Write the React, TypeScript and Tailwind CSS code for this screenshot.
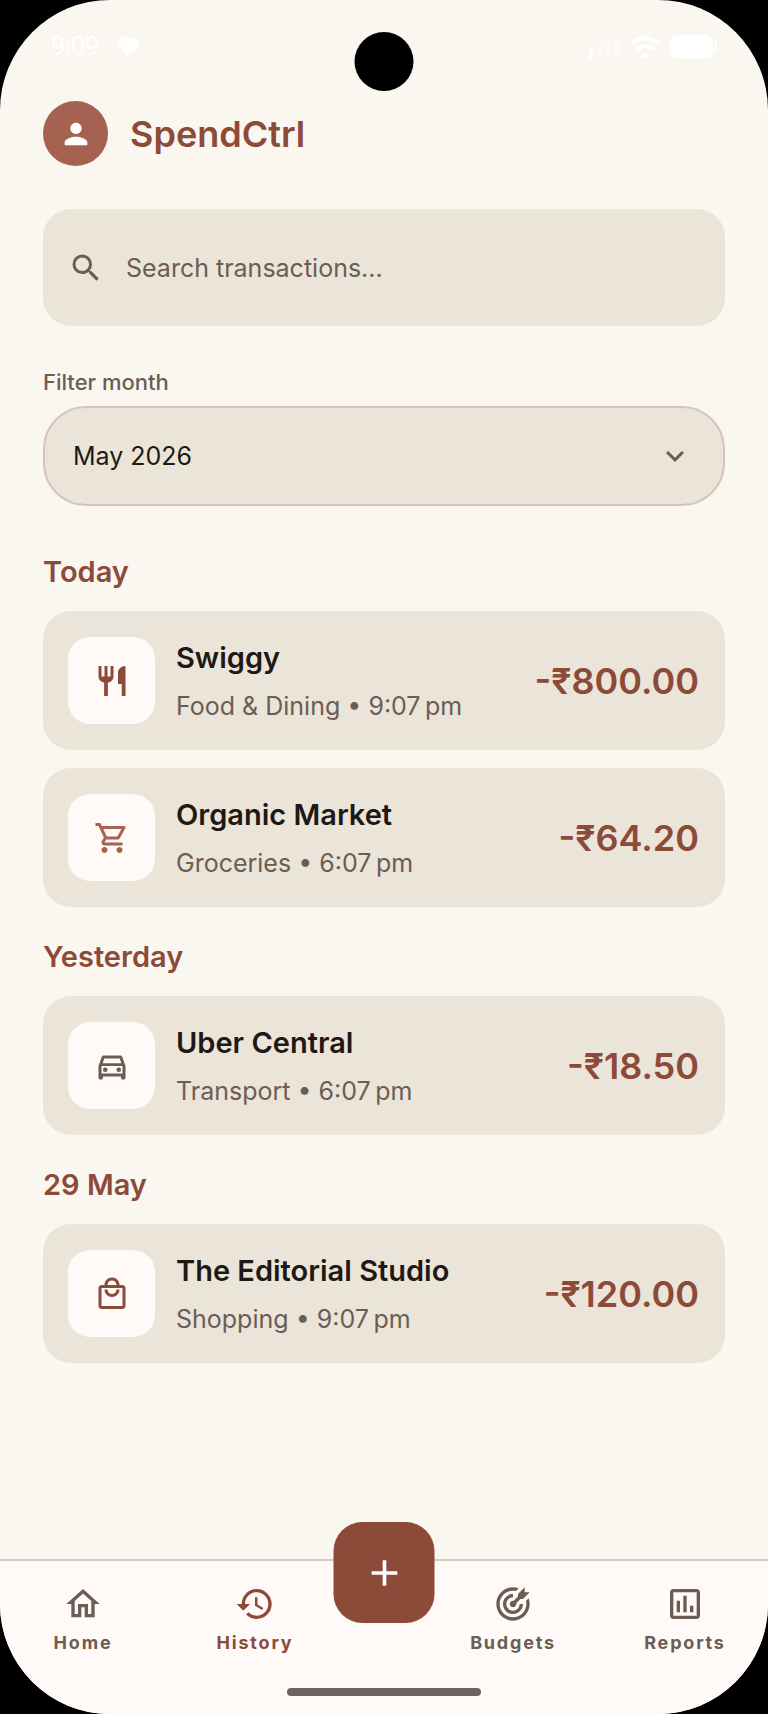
"use client";

import { useState } from "react";
import type { ReactNode } from "react";
import {
    MdAdd,
    MdHistory,
    MdKeyboardArrowDown,
    MdOutlineDirectionsCar,
    MdOutlineHome,
    MdOutlineLocalMall,
    MdOutlineShoppingCart,
    MdPerson,
    MdRestaurant,
    MdSearch,
} from "react-icons/md";

type Transaction = {
    name: string;
    category: string;
    time: string;
    amount: string;
    icon: ReactNode;
};

const groups: { label: string; items: Transaction[] }[] = [
    {
        label: "Today",
        items: [
            {
                name: "Swiggy",
                category: "Food & Dining",
                time: "9:07\u202fpm",
                amount: "-₹800.00",
                icon: <MdRestaurant className="size-9 text-[#8c4a38]" />,
            },
            {
                name: "Organic Market",
                category: "Groceries",
                time: "6:07\u202fpm",
                amount: "-₹64.20",
                icon: <MdOutlineShoppingCart className="size-9 text-[#a8624f]" />,
            },
        ],
    },
    {
        label: "Yesterday",
        items: [
            {
                name: "Uber Central",
                category: "Transport",
                time: "6:07\u202fpm",
                amount: "-₹18.50",
                icon: <MdOutlineDirectionsCar className="size-9 text-[#6b5d54]" />,
            },
        ],
    },
    {
        label: "29 May",
        items: [
            {
                name: "The Editorial Studio",
                category: "Shopping",
                time: "9:07\u202fpm",
                amount: "-₹120.00",
                icon: <MdOutlineLocalMall className="size-9 text-[#8c4a38]" />,
            },
        ],
    },
];

function TargetIcon() {
    return (
        <svg viewBox="0 0 24 24" fill="currentColor" className="size-10">
            <path d="M12 2C6.47 2 2 6.5 2 12C2 17.5 6.5 22 12 22S22 17.5 22 12C22 10.84 21.79 9.69 21.39 8.61L19.79 10.21C19.93 10.8 20 11.4 20 12C20 16.42 16.42 20 12 20S4 16.42 4 12 7.58 4 12 4C12.6 4 13.2 4.07 13.79 4.21L15.4 2.6C14.31 2.21 13.16 2 12 2M19 2L15 6V7.5L12.45 10.05C12.3 10 12.15 10 12 10C10.9 10 10 10.9 10 12S10.9 14 12 14 14 13.1 14 12C14 11.85 14 11.7 13.95 11.55L16.5 9H18L22 5H19V2M12 6C8.69 6 6 8.69 6 12S8.69 18 12 18 18 15.31 18 12H16C16 14.21 14.21 16 12 16S8 14.21 8 12 9.79 8 12 8V6Z" />
        </svg>
    );
}

function ReportsIcon() {
    return (
        <svg viewBox="0 0 24 24" fill="currentColor" className="size-10">
            <path d="M9 17H7v-7h2v7zm4 0h-2V7h2v10zm4 0h-2v-4h2v4zm2 2H5V5h14v14zm0-16H5c-1.1 0-2 .9-2 2v14c0 1.1.9 2 2 2h14c1.1 0 2-.9 2-2V5c0-1.1-.9-2-2-2z" />
        </svg>
    );
}

function StatusBar() {
    return (
        <div className="relative flex h-[92px] items-center justify-between px-[51px] pt-[2px] text-white">
            <div className="flex items-center gap-[18px]">
                <span className="font-['Roboto',sans-serif] text-[25px] leading-7">9:09</span>
                <svg viewBox="0 0 22 22" fill="currentColor" className="size-[22px]">
                    <path d="M3 11.5C1 10 .2 8 .8 5.600C1.500 2.500 4 .5 7 .5H13C15 .5 16.500 1 17.500 1.800C13 1.200 8 .8 5.500 2.500C3 4.200 2.200 7.500 3 11.500Z" />
                    <path d="M9.500 1.800H14.500C18.500 1.800 21.500 4.800 21.500 9C21.500 13 18.500 16.200 14.500 16.200H12V21.500C7.500 18.500 3 13.500 3 8.500C3 4.500 5.500 1.800 9.500 1.800Z" />
                </svg>
            </div>

            {/* Camera cutout */}
            <div className="absolute left-1/2 top-8 size-[59px] -translate-x-1/2 rounded-full bg-black"></div>

            <div className="flex items-center gap-[10px]">
                <svg viewBox="0 0 31 24" fill="currentColor" className="h-6 w-[31px]">
                    <rect x="0" y="14" width="4.500" height="9.500" rx="2" />
                    <g className="text-[#fff8f5]">
                        <rect x="9" y="10" width="4.500" height="13" rx="1.500" />
                        <rect x="17.500" y="5.500" width="4.500" height="17.500" rx="1.500" />
                        <rect x="26" y="1.500" width="4.500" height="21.500" rx="1.500" />
                    </g>
                </svg>
                <svg viewBox="0 0 30 24" className="h-6 w-[30px]" fill="none" stroke="currentColor" strokeWidth="4" strokeLinecap="round">
                    <path d="M2.500 8C9 1.500 21 1.500 27.500 8" />
                    <path d="M8.500 13.500C12 10.500 18 10.500 21.500 13.500" />
                    <circle cx="15" cy="20.500" r="2.800" fill="currentColor" stroke="none" />
                </svg>
                <svg viewBox="0 0 47 24" fill="currentColor" className="h-6 w-[47px]">
                    <rect x="0" y="0" width="43" height="23.500" rx="7" />
                    <path d="M44.500 6.500C46 6.500 47 7.500 47 9V14.500C47 16 46 17 44.500 17Z" />
                </svg>
            </div>
        </div>
    );
}

function TransactionCard({ item }: { item: Transaction }) {
    return (
        <li className="flex items-center gap-[21px] rounded-[28px] bg-[#ebe4d9] py-[26px] pr-[26px] pl-[25px]">
            <div className="flex size-[87px] shrink-0 items-center justify-center rounded-[22px] bg-[#fff9f7]">
                {item.icon}
            </div>
            <div className="flex min-w-0 flex-1 flex-col gap-3">
                <h3 className="text-[29px] leading-[38px] font-semibold text-[#1f1815]">{item.name}</h3>
                <p className="text-[25px] leading-[34px] text-[#6b5d54]">
                    {item.category} • {item.time}
                </p>
            </div>
            <span className="text-[36px] leading-[44px] font-semibold text-[#8c4a38]">{item.amount}</span>
        </li>
    );
}

function NavItem({ label, icon, active }: { label: string; icon: ReactNode; active?: boolean }) {
    return (
        <a
            href="#"
            aria-current={active ? "page" : undefined}
            className={`flex w-24 flex-col items-center gap-[7px] ${active ? "text-[#8c4a38]" : "text-[#6b5d54]"}`}
        >
            {icon}
            <span className="text-[18px] leading-6 font-bold tracking-widest">{label}</span>
        </a>
    );
}

export default function App() {
    const [search, setSearch] = useState("");
    const [month, setMonth] = useState("May 2026");

    return (
        <div className="min-h-screen bg-black font-['Inter',sans-serif]">
            <div className="flex min-h-screen flex-col overflow-hidden rounded-[110px] bg-[#faf6f0]">
                <StatusBar />

                <main className="flex-1 px-[43px] pt-[9px] pb-10">
                    <header className="flex items-center gap-[22px]">
                        <button
                            aria-label="Profile"
                            className="flex size-[65px] items-center justify-center rounded-full bg-[#a66250] text-white"
                        >
                            <MdPerson className="size-[34px]" />
                        </button>
                        <h1 className="text-[36px] leading-[44px] font-semibold text-[#8c4a38]">SpendCtrl</h1>
                    </header>

                    {/* Search */}
                    <div className="mt-[43px] flex h-[117px] items-center gap-[22px] rounded-[28px] bg-[#ebe4d9] px-[25px]">
                        <MdSearch className="size-9 shrink-0 text-[#6b5d54]" />
                        <input
                            type="text"
                            aria-label="Search transactions"
                            placeholder="Search transactions..."
                            value={search}
                            onChange={(e) => setSearch(e.target.value)}
                            className="min-w-0 flex-1 bg-transparent text-[25px] leading-[34px] text-[#1f1815] outline-none placeholder:text-[#6b5d54]"
                        />
                    </div>

                    {/* Month filter */}
                    <label htmlFor="month" className="mt-[42px] block text-[22px] leading-7 font-medium text-[#6b5d54]">
                        Filter month
                    </label>
                    <div className="relative mt-[10px]">
                        <select
                            id="month"
                            value={month}
                            onChange={(e) => setMonth(e.target.value)}
                            className="block h-[100px] w-full appearance-none rounded-[43px] border-2 border-[#d6c4ba] bg-[#ebe4d9] px-7 text-[25px] leading-[34px] text-[#1f1815] outline-none"
                        >
                            <option>May 2026</option>
                        </select>
                        <MdKeyboardArrowDown className="pointer-events-none absolute top-8 right-8 size-9 text-[#6b5d54]" />
                    </div>

                    {/* Transactions by day */}
                    <div className="mt-[47px] flex flex-col gap-[31px]">
                        {groups.map((group) => (
                            <section key={group.label}>
                                <h2 className="text-[29px] leading-[38px] font-semibold text-[#8c4a38]">{group.label}</h2>
                                <ul className="mt-5 flex flex-col gap-[18px]">
                                    {group.items.map((item) => (
                                        <TransactionCard key={item.name} item={item} />
                                    ))}
                                </ul>
                            </section>
                        ))}
                    </div>
                </main>

                <nav className="relative border-t-2 border-[#d9c9c1] bg-[#fff9f7] pt-[23px] pb-[18px]">
                    <div className="flex justify-between px-[35px]">
                        <div className="flex gap-19">
                            <NavItem label="Home" icon={<MdOutlineHome className="size-10" />} />
                            <NavItem label="History" icon={<MdHistory className="size-10" />} active />
                        </div>
                        <div className="flex gap-19">
                            <NavItem label="Budgets" icon={<TargetIcon />} />
                            <NavItem label="Reports" icon={<ReportsIcon />} />
                        </div>
                    </div>

                    <button
                        aria-label="Add transaction"
                        className="absolute -top-[39px] left-1/2 flex size-[101px] -translate-x-1/2 items-center justify-center rounded-[29px] bg-[#8c4a38] text-white"
                    >
                        <MdAdd className="size-11" />
                    </button>

                    {/* Home indicator */}
                    <div className="mx-auto mt-[33px] h-2 w-[194px] rounded-full bg-[#6e645d]"></div>
                </nav>
            </div>
        </div>
    );
}
